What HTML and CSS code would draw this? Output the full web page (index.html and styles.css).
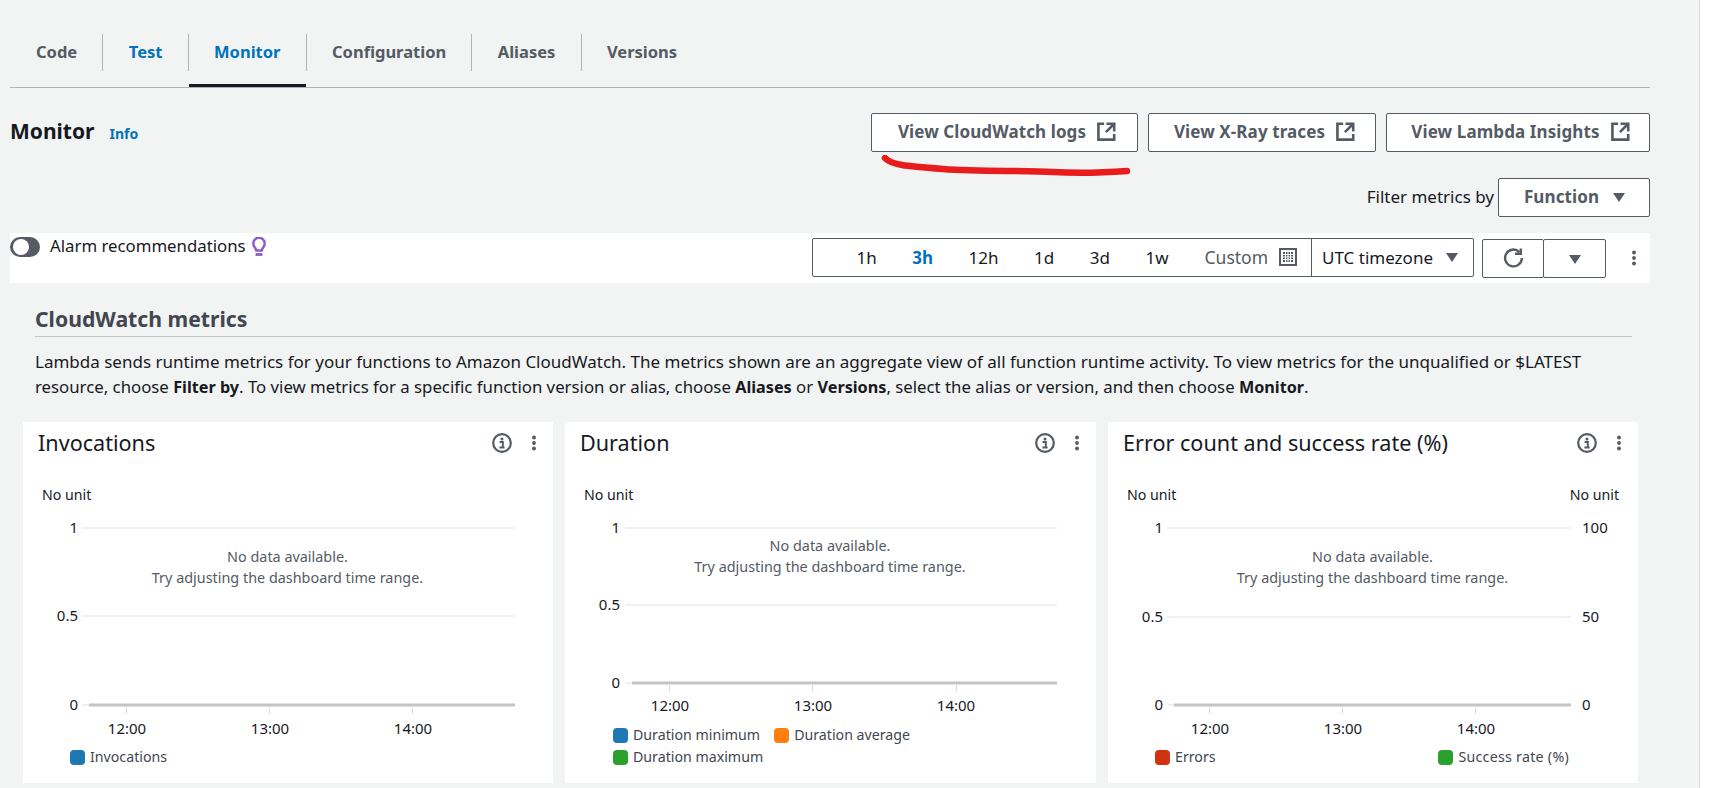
FILE: index.html
```html
<!DOCTYPE html>
<html lang="en">
<head>
<meta charset="utf-8">
<title>Monitor</title>
<link rel="stylesheet" href="styles.css">
</head>
<body>
<svg class="defs" width="0" height="0" aria-hidden="true">
  <symbol id="i-ext" viewBox="0 0 16 16"><path d="M14.500 8V1.500H8M14.500 1.500 7.500 8.500M6 1.500H1.200v13.300h13.300V10" fill="none" stroke="currentColor" stroke-width="2.200"/></symbol>
  <symbol id="i-caret" viewBox="0 0 16 16"><path d="M2 4h12l-6 9z" fill="currentColor"/></symbol>
  <symbol id="i-kebab" viewBox="0 0 16 16"><circle cx="8" cy="2.500" r="1.900" fill="currentColor"/><circle cx="8" cy="8" r="1.900" fill="currentColor"/><circle cx="8" cy="13.500" r="1.900" fill="currentColor"/></symbol>
  <symbol id="i-info" viewBox="0 0 20 20"><circle cx="10" cy="10" r="8.800" fill="none" stroke="currentColor" stroke-width="2.200"/><circle cx="10" cy="6" r="1.500" fill="currentColor"/><path d="M7.600 9h3.200v5M7.400 14.400h5.200" fill="none" stroke="currentColor" stroke-width="2"/></symbol>
</svg>
<div class="page">
  <main class="main">
    <nav class="tabs">
      <a class="tab">Code</a>
      <a class="tab tab-link">Test</a>
      <a class="tab tab-link tab-active">Monitor</a>
      <a class="tab">Configuration</a>
      <a class="tab">Aliases</a>
      <a class="tab">Versions</a>
    </nav>

    <header class="head">
      <div class="head-title">
        <h1 class="title">Monitor</h1>
        <a class="info">Info</a>
      </div>
      <div class="head-actions">
        <button class="btn btn-a">View CloudWatch logs <svg class="ic"><use href="#i-ext"/></svg></button>
        <button class="btn btn-b">View X-Ray traces <svg class="ic"><use href="#i-ext"/></svg></button>
        <button class="btn btn-c">View Lambda Insights <svg class="ic"><use href="#i-ext"/></svg></button>
      </div>
    </header>

    <svg class="scribble" width="260" height="24" viewBox="0 0 260 24"><path d="M5 3C12 10 24 11 63 14S140 15 173 17 247 16 247 16" fill="none" stroke="#e81c1c" stroke-width="6.500" stroke-linecap="round"/></svg>

    <div class="filter">
      <span class="filter-label">Filter metrics by</span>
      <button class="btn btn-fn">Function <svg class="ic-s"><use href="#i-caret"/></svg></button>
    </div>

    <div class="strip">
      <span class="toggle"><span class="knob"></span></span>
      <span class="alarm">Alarm recommendations</span>
      <svg class="bulb" viewBox="0 0 14 20"><path d="M4.300 13.500C3.700 10.600 1.300 9.700 1.300 6.400a5.700 5.700 0 0 1 11.400 0c0 3.300-2.400 4.200-3 7.100z" fill="none" stroke="#8a5cd0" stroke-width="2.400"/><path d="M3.600 17.500h6.800" stroke="#8a5cd0" stroke-width="2.800"/></svg>
      <div class="range">
        <div class="range-times">
          <span>1h</span><span class="range-on">3h</span><span>12h</span><span>1d</span><span>3d</span><span>1w</span>
        </div>
        <div class="range-custom">Custom
          <svg class="cal" viewBox="0 0 18 18"><rect x="1" y="1" width="16" height="16" fill="none" stroke="currentColor" stroke-width="2"/><path d="M4 4h10v10H4z" fill="currentColor"/><path d="M4 6.500h10M4 9h10M4 11.500h10M6.500 4v10M9 4v10M11.500 4v10" stroke="#fff" stroke-width="1"/></svg>
        </div>
        <div class="range-zone">UTC timezone <svg class="ic-s"><use href="#i-caret"/></svg></div>
      </div>
      <button class="square sq-refresh"><svg class="ic-r" viewBox="0 0 20 20"><path d="M18 9.500a8 8 0 1 1-2.600-5.900M17 0.500v5h-5.500" fill="none" stroke="currentColor" stroke-width="2.300"/></svg></button>
      <button class="square sq-drop"><svg class="ic-s"><use href="#i-caret"/></svg></button>
      <svg class="kebab kebab-strip"><use href="#i-kebab"/></svg>
    </div>

    <section class="metrics">
      <h2 class="metrics-title">CloudWatch metrics</h2>
      <div class="metrics-text">
        <p class="line">Lambda sends runtime metrics for your functions to Amazon CloudWatch. The metrics shown are an aggregate view of all function runtime activity. To view metrics for the unqualified or $LATEST</p>
        <p class="line line-two">resource, choose <b>Filter by</b>. To view metrics for a specific function version or alias, choose <b>Aliases</b> or <b>Versions</b>, select the alias or version, and then choose <b>Monitor</b>.</p>
      </div>
    </section>

    <div class="cards">
      <article class="card">
        <div class="card-head">
          <h3 class="card-title">Invocations</h3>
          <svg class="card-info"><use href="#i-info"/></svg>
          <svg class="kebab"><use href="#i-kebab"/></svg>
        </div>
        <div class="units"><span>No unit</span></div>
        <svg class="plot" width="530" height="235" viewBox="0 0 530 235">
          <line class="grid" x1="59" x2="492" y1="18" y2="18"/>
          <line class="grid" x1="59" x2="492" y1="106" y2="106"/>
          <line class="grid" x1="59" x2="66" y1="195" y2="195"/>
          <line class="axis" x1="66" x2="492" y1="195" y2="195"/>
          <path class="tick" d="M103.500 197v7M246.500 197v7M389.500 197v7"/>
          <text class="lbl end" x="55" y="23">1</text>
          <text class="lbl end" x="55" y="111">0.5</text>
          <text class="lbl end" x="55" y="200">0</text>
          <text class="lbl mid" x="104" y="224">12:00</text>
          <text class="lbl mid" x="247" y="224">13:00</text>
          <text class="lbl mid" x="390" y="224">14:00</text>
          <text class="nodata mid" x="264.500" y="52">No data available.</text>
          <text class="nodata mid" x="264.500" y="73">Try adjusting the dashboard time range.</text>
        </svg>
        <div class="legend legend-1">
          <span class="key"><i class="dot dot-blue"></i>Invocations</span>
        </div>
      </article>

      <article class="card">
        <div class="card-head">
          <h3 class="card-title">Duration</h3>
          <svg class="card-info"><use href="#i-info"/></svg>
          <svg class="kebab"><use href="#i-kebab"/></svg>
        </div>
        <div class="units"><span>No unit</span></div>
        <svg class="plot" width="530" height="213" viewBox="0 0 530 213">
          <line class="grid" x1="60" x2="492" y1="18" y2="18"/>
          <line class="grid" x1="60" x2="492" y1="95" y2="95"/>
          <line class="grid" x1="60" x2="67" y1="173" y2="173"/>
          <line class="axis" x1="67" x2="492" y1="173" y2="173"/>
          <path class="tick" d="M104.500 175v7M247.500 175v7M391.500 175v7"/>
          <text class="lbl end" x="55" y="23">1</text>
          <text class="lbl end" x="55" y="100">0.5</text>
          <text class="lbl end" x="55" y="178">0</text>
          <text class="lbl mid" x="105" y="201">12:00</text>
          <text class="lbl mid" x="248" y="201">13:00</text>
          <text class="lbl mid" x="391" y="201">14:00</text>
          <text class="nodata mid" x="265" y="41">No data available.</text>
          <text class="nodata mid" x="265" y="62">Try adjusting the dashboard time range.</text>
        </svg>
        <div class="legend legend-2">
          <span class="key key-min"><i class="dot dot-blue"></i>Duration minimum</span>
          <span class="key"><i class="dot dot-orange"></i>Duration average</span>
          <span class="key"><i class="dot dot-green"></i>Duration maximum</span>
        </div>
      </article>

      <article class="card">
        <div class="card-head">
          <h3 class="card-title">Error count and success rate (%)</h3>
          <svg class="card-info"><use href="#i-info"/></svg>
          <svg class="kebab"><use href="#i-kebab"/></svg>
        </div>
        <div class="units"><span>No unit</span><span>No unit</span></div>
        <svg class="plot" width="530" height="235" viewBox="0 0 530 235">
          <line class="grid" x1="59" x2="463" y1="18" y2="18"/>
          <line class="grid" x1="59" x2="463" y1="107" y2="107"/>
          <line class="grid" x1="59" x2="66" y1="195" y2="195"/>
          <line class="axis" x1="66" x2="463" y1="195" y2="195"/>
          <path class="tick" d="M101.500 197v7M234.500 197v7M367.500 197v7"/>
          <text class="lbl end" x="55" y="23">1</text>
          <text class="lbl end" x="55" y="112">0.5</text>
          <text class="lbl end" x="55" y="200">0</text>
          <text class="lbl" x="474" y="23">100</text>
          <text class="lbl" x="474" y="112">50</text>
          <text class="lbl" x="474" y="200">0</text>
          <text class="lbl mid" x="102" y="224">12:00</text>
          <text class="lbl mid" x="235" y="224">13:00</text>
          <text class="lbl mid" x="368" y="224">14:00</text>
          <text class="nodata mid" x="264.500" y="52">No data available.</text>
          <text class="nodata mid" x="264.500" y="73">Try adjusting the dashboard time range.</text>
        </svg>
        <div class="legend legend-3">
          <span class="key"><i class="dot dot-red"></i>Errors</span>
          <span class="key key-rate"><i class="dot dot-green"></i>Success rate (%)</span>
        </div>
      </article>
    </div>
  </main>
  <div class="rest"></div>
</div>
</body>
</html>
```
FILE: styles.css
```css
* { box-sizing: border-box; }
html, body { margin: 0; padding: 0; height: 100%; overflow: hidden; }
body { font-family: "Noto Sans", "Liberation Sans", sans-serif; font-size: 17px; color: #16191f; background: #fff; }
.defs { position: absolute; }
.page { display: flex; height: 788px; }
.main { position: relative; width: 1700px; padding: 0 49px 0 10px; background: #f2f3f3; border-right: 1px solid #d5dbdb; flex: none; overflow: hidden; }
.rest { flex: 1; background: #fff; }

.tabs { display: flex; height: 88px; padding: 34px 0 16px; border-bottom: 1px solid #aab7b8; }
.tab { position: relative; display: flex; align-items: center; padding: 0 25.300px 3px; height: 37px; font-weight: 700; font-size: 16.500px; color: #545b64; border-right: 1px solid #aab7b8; }
.tab:first-child { padding-left: 26px; }
.tab:last-child { border-right: 0; }
.tab-link { color: #0073bb; }
.tab-active::after { content: ""; position: absolute; left: 0; right: 0; bottom: -16px; height: 3px; background: #16191f; }

.head { display: flex; justify-content: space-between; align-items: center; margin-top: 25px; height: 39px; }
.head-title { display: flex; align-items: baseline; gap: 15px; margin-top: -3px; }
.title { margin: 0; font-size: 21px; font-weight: 700; color: #16191f; }
.info { font-size: 14px; font-weight: 700; color: #0073bb; }
.head-actions { display: flex; gap: 10px; }

.btn { display: flex; align-items: center; justify-content: center; gap: 11px; height: 39px; padding: 0 0 2px 5px; font: 700 17px "Noto Sans", sans-serif; letter-spacing: 0.1px; color: #545b64; background: #fff; border: 1px solid #545b64; border-radius: 2px; }
.btn-a { width: 267px; }
.btn-b { width: 228px; }
.btn-c { width: 264px; }
.btn-fn { width: 152px; gap: 12px; padding-left: 3px; }
.ic { width: 19px; height: 19px; }
.ic-s { width: 16px; height: 16px; color: #545b64; }

.scribble { position: absolute; left: 880px; top: 155px; }

.filter { display: flex; justify-content: flex-end; align-items: center; gap: 4px; margin-top: 26px; }
.filter-label { font-size: 17px; color: #16191f; margin-top: -2px; }

.strip { display: flex; align-items: flex-start; margin-top: 16px; height: 50px; background: #fff; }
.toggle { display: block; width: 30px; height: 20px; margin-top: 4px; padding: 2px 3px; border-radius: 10px; background: #545b64; }
.knob { display: block; width: 16px; height: 16px; border-radius: 50%; background: #fff; }
.alarm { margin-left: 10px; margin-top: 2px; line-height: 22px; font-size: 16.800px; }
.bulb { width: 14px; height: 20px; margin: 4px 0 0 6px; }
.range { display: flex; height: 39px; margin: 5px 0 0 auto; background: #fff; border: 1px solid #545b64; border-radius: 2px; color: #16191f; }
.range-times { display: flex; align-items: center; gap: 35.500px; padding-left: 44px; padding-bottom: 1px; }
.range-on { color: #0073bb; font-weight: 700; }
.range-custom { display: flex; align-items: center; gap: 11px; margin-left: 36px; padding-right: 14px; padding-bottom: 1px; font-size: 17.500px; color: #545b64; }
.cal { width: 18px; height: 18px; color: #545b64; }
.range-zone { display: flex; align-items: center; gap: 11px; padding: 0 13px 1px 10px; border-left: 1px solid #545b64; }
.square { display: flex; align-items: center; justify-content: center; height: 39px; margin-top: 6px; padding: 0; background: #fff; border: 1px solid #545b64; border-radius: 2px; color: #545b64; }
.sq-refresh { width: 62px; margin-left: 8px; }
.sq-drop { width: 63px; margin-left: -1px; }
.ic-r { width: 21px; height: 21px; }
.kebab { width: 16px; height: 16px; color: #545b64; }
.kebab-strip { margin: 17px 8px 0 20px; }

.metrics { margin: 0 18px 0 25px; }
.metrics-title { margin: 24px 0 0; padding-bottom: 3px; height: 30px; line-height: 24px; font-size: 21.200px; font-weight: 700; color: #424650; border-bottom: 1px solid #c5c5c5; }
.metrics-text { margin: 12px 0 0; height: 50px; font-size: 17px; line-height: 25px; color: #16191f; }
.line { margin: 0; white-space: nowrap; }
.line-two { font-size: 16.800px; }
.line-two b { font-size: 16.200px; }

.cards { display: grid; grid-template-columns: 530px 531px 530px; column-gap: 12px; margin: 23px 0 0 13px; }
.card { display: flex; flex-direction: column; height: 361px; background: #fff; }
.card-head { display: flex; align-items: center; height: 42px; padding: 0 11px 0 15px; }
.card-title { flex: 1; margin: 0; padding-bottom: 2px; font-size: 21.600px; font-weight: 400; color: #16191f; }
.card-info { width: 20px; height: 20px; color: #545b64; margin-right: 14px; }
.units { display: flex; justify-content: space-between; margin: 21px 19px 0 19px; height: 20px; line-height: 20px; font-size: 14.200px; color: #16191f; }
.plot { display: block; margin-top: 5px; flex: none; }
.grid { stroke: #eaeded; stroke-width: 1.500; }
.axis { stroke: #c4c4c4; stroke-width: 3; }
.tick { stroke: #dfdfdf; stroke-width: 1; fill: none; }
.lbl { font-size: 15px; fill: #16191f; }
.end { text-anchor: end; }
.mid { text-anchor: middle; }
.nodata { font-size: 14.400px; fill: #545b64; }

.legend { display: flex; flex-wrap: wrap; font-size: 14.200px; line-height: 22px; color: #424650; padding-top: 1px; }
.legend-1 { padding-left: 47px; }
.legend-2 { padding-left: 48px; width: 400px; }
.legend-3 { justify-content: space-between; padding: 1px 69px 0 47px; }
.key { display: flex; align-items: center; margin-right: 0; }
.key-min { margin-right: 14px; }
.key-rate { letter-spacing: 0.280px; }
.legend-2 .key:last-child { width: 100%; }
.dot { display: block; width: 15px; height: 15px; margin-right: 5px; border-radius: 4px; }
.dot-blue { background: #1f77b4; }
.dot-orange { background: #ff7f0e; }
.dot-green { background: #2ca02c; }
.dot-red { background: #d13212; }
```
